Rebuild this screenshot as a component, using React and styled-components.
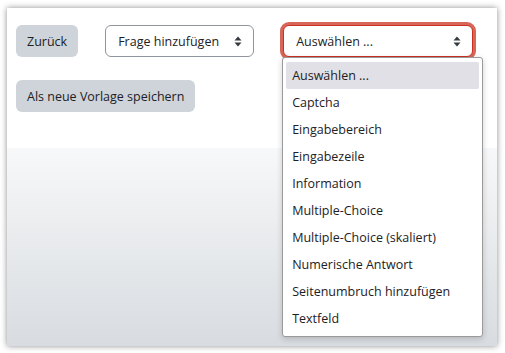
import React from 'react';
import styled, { createGlobalStyle } from 'styled-components';

const GlobalStyle = createGlobalStyle`
  html, body {
    margin: 0;
    padding: 0;
    background: #ffffff;
  }
  body {
    font-family: 'Open Sans', 'Noto Sans', sans-serif;
    font-size: 12.5px;
    color: #1d2125;
  }
`;

const Frame = styled.div`
  width: 505px;
  height: 353px;
  padding: 8px 8px 7px 7px;
  box-sizing: border-box;
`;

const Panel = styled.div`
  position: relative;
  height: 338px;
  display: flex;
  flex-direction: column;
  background: #fff;
  box-shadow: 0 0 6px rgba(0, 0, 0, 0.45);
`;

const Top = styled.div`
  height: 140px;
  padding: 17px 0 0 9px;
  box-sizing: border-box;
`;

const Bottom = styled.div`
  flex: 1;
  background: linear-gradient(#f7f8f9, #d8dce0);
`;

const Row = styled.div`
  display: flex;
  align-items: center;
  margin-bottom: ${(p) => p.gap || 0}px;
`;

const Button = styled.div`
  height: 32px;
  padding: 0 11px;
  display: flex;
  align-items: center;
  background: #ced4da;
  border-radius: 6px;
  color: #1d2125;
  font-size: 12.5px;
  margin-left: ${(p) => p.offset || 0}px;
`;

const SelectWrap = styled.div`
  position: relative;
  margin-left: ${(p) => p.offset || 0}px;
`;

const Select = styled.div`
  width: ${(p) => p.width}px;
  height: 32px;
  box-sizing: border-box;
  padding: 0 11px 0 12px;
  display: flex;
  align-items: center;
  justify-content: space-between;
  border: 1px solid ${(p) => (p.focus ? '#ca3120' : '#8f959e')};
  border-radius: 6px;
  background: #fff;
  box-shadow: ${(p) => (p.focus ? '0 0 0 3px rgba(202, 49, 32, 0.75)' : 'none')};
  font-size: 12.5px;
`;

const Menu = styled.ul`
  position: absolute;
  top: 32px;
  left: -1px;
  width: 201px;
  margin: 0;
  padding: 4px 3px 4px 3px;
  box-sizing: border-box;
  list-style: none;
  background: #fff;
  border: 1px solid #9a9a9a;
  border-radius: 3px;
  box-shadow: 0 2px 6px rgba(0, 0, 0, 0.18);
  z-index: 2;
`;

const Item = styled.li`
  height: 27px;
  padding-left: 6px;
  display: flex;
  align-items: center;
  border-radius: 2px;
  background: ${(p) => (p.active ? '#e0e0e6' : 'transparent')};
  font-size: 12.5px;
  color: #1d2125;
`;

const Arrows = () => (
  <svg width="8" height="11" viewBox="0 0 8 11">
    <path d="M4 0.5 L7.5 4.5 H0.5 Z" fill="#343a40" />
    <path d="M4 10.5 L7.5 6.5 H0.5 Z" fill="#343a40" />
  </svg>
);

const options = [
  'Auswählen ...',
  'Captcha',
  'Eingabebereich',
  'Eingabezeile',
  'Information',
  'Multiple-Choice',
  'Multiple-Choice (skaliert)',
  'Numerische Antwort',
  'Seitenumbruch hinzufügen',
  'Textfeld',
];

export default function App() {
  return (
    <Frame>
      <GlobalStyle />
      <Panel>
        <Top>
          <Row gap={23}>
            <Button>Zurück</Button>
            <SelectWrap offset={27}>
              <Select width={149}>
                <span>Frage hinzufügen</span>
                <Arrows />
              </Select>
            </SelectWrap>
            <SelectWrap offset={29}>
              <Select width={190} focus>
                <span>Auswählen ...</span>
                <Arrows />
              </Select>
              <Menu>
                {options.map((o, i) => (
                  <Item key={o} active={i === 0}>
                    {o}
                  </Item>
                ))}
              </Menu>
            </SelectWrap>
          </Row>
          <Row>
            <Button>Als neue Vorlage speichern</Button>
          </Row>
        </Top>
        <Bottom />
      </Panel>
    </Frame>
  );
}
